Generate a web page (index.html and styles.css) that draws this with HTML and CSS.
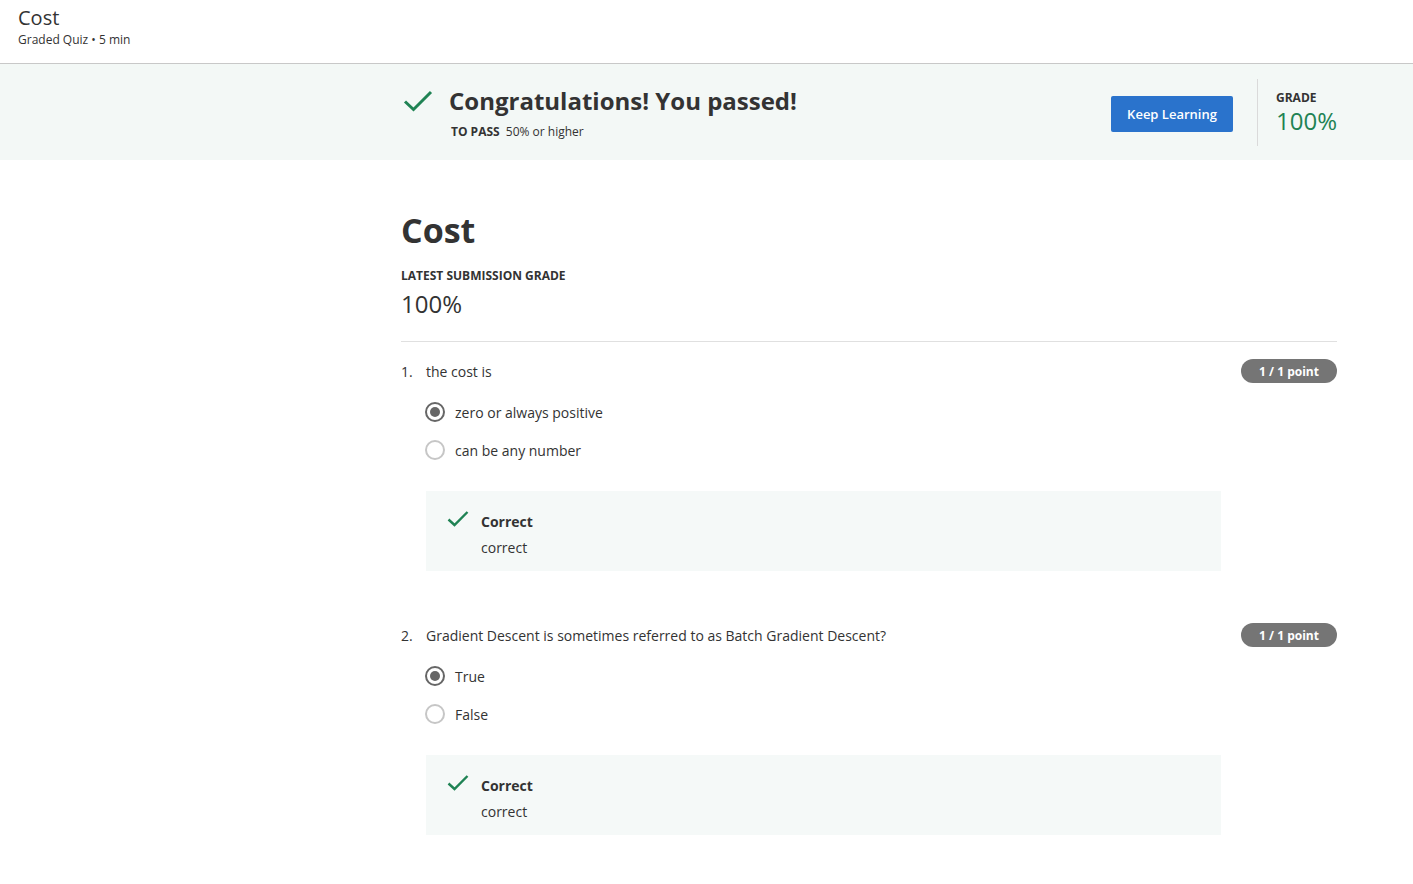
FILE: index.html
```html
<!DOCTYPE html>
<html lang="en">
<head>
<meta charset="utf-8">
<title>Cost</title>
<link rel="stylesheet" href="styles.css">
</head>
<body>
<header class="topbar">
  <div class="topbar-title">Cost</div>
  <div class="topbar-sub">Graded Quiz • 5 min</div>
</header>

<section class="banner">
  <div class="banner-inner">
    <div class="banner-main">
      <svg class="banner-check" width="30" height="24" viewBox="0 0 30 24"><path d="M2 12.5 L10.5 20.5 L28 3" fill="none" stroke="#1f8354" stroke-width="3"/></svg>
      <div class="banner-text">
        <h1 class="banner-title">Congratulations! You passed!</h1>
        <div class="banner-pass"><span class="pass-label">TO PASS</span> 50% or higher</div>
      </div>
    </div>
    <button class="btn-primary">Keep Learning</button>
    <div class="banner-grade">
      <div class="grade-label">GRADE</div>
      <div class="grade-value">100%</div>
    </div>
  </div>
</section>

<main class="content">
  <h2 class="quiz-title">Cost</h2>
  <div class="latest-label">LATEST SUBMISSION GRADE</div>
  <div class="latest-value">100%</div>

  <div class="questions">
    <div class="question">
      <div class="q-head">
        <span class="q-num">1.</span>
        <span class="q-text">the cost is</span>
        <span class="badge">1 / 1 point</span>
      </div>
      <div class="options">
        <label class="option"><span class="radio checked"></span><span>zero or always positive</span></label>
        <label class="option"><span class="radio"></span><span>can be any number</span></label>
      </div>
      <div class="feedback">
        <svg class="fb-check" width="22" height="18" viewBox="0 0 22 18"><path d="M1.5 9.5 L7.5 15 L20.5 2" fill="none" stroke="#1f8354" stroke-width="2.4"/></svg>
        <div class="fb-text">
          <div class="fb-title">Correct</div>
          <div class="fb-body">correct</div>
        </div>
      </div>
    </div>

    <div class="question">
      <div class="q-head">
        <span class="q-num">2.</span>
        <span class="q-text">Gradient Descent is sometimes referred to as Batch Gradient Descent?</span>
        <span class="badge">1 / 1 point</span>
      </div>
      <div class="options">
        <label class="option"><span class="radio checked"></span><span>True</span></label>
        <label class="option"><span class="radio"></span><span>False</span></label>
      </div>
      <div class="feedback">
        <svg class="fb-check" width="22" height="18" viewBox="0 0 22 18"><path d="M1.5 9.5 L7.5 15 L20.5 2" fill="none" stroke="#1f8354" stroke-width="2.4"/></svg>
        <div class="fb-text">
          <div class="fb-title">Correct</div>
          <div class="fb-body">correct</div>
        </div>
      </div>
    </div>
  </div>
</main>
</body>
</html>
```

FILE: styles.css
```css
* { box-sizing: border-box; }
html, body { margin: 0; padding: 0; background: #fff; }
body {
  font-family: "Open Sans", "Noto Sans", sans-serif;
  color: #333;
  overflow: hidden;
}

.topbar {
  height: 64px;
  padding: 5px 18px 0;
  border-bottom: 1px solid #c8c8c8;
}
.topbar-title {
  font-size: 20px;
  line-height: 26px;
  color: #333;
}
.topbar-sub {
  font-size: 12px;
  line-height: 16px;
  margin-top: 1px;
  color: #333;
}

.banner {
  background: #f3f8f6;
  height: 96px;
}
.banner-inner {
  margin-left: 401px;
  width: 936px;
  height: 100%;
  display: flex;
  align-items: center;
}
.banner-main {
  flex: 1;
  display: flex;
  align-items: flex-start;
  padding-top: 4px;
}
.banner-check {
  margin-top: 2px;
  margin-left: 2px;
  margin-right: 16px;
}
.banner-title {
  margin: 0;
  font-size: 24px;
  font-weight: 700;
  line-height: 28px;
  color: #333;
}
.banner-pass {
  font-size: 12px;
  line-height: 18px;
  margin-top: 8px;
  margin-left: 2px;
}
.pass-label { font-weight: 700; margin-right: 3px; }

.btn-primary {
  font-family: inherit;
  background: #2a73cc;
  color: #fff;
  border: none;
  border-radius: 2px;
  height: 36px;
  width: 122px;
  font-size: 13px;
  font-weight: 600;
  padding: 0;
  margin-right: 24px;
  margin-top: 3px;
}
.banner-grade {
  border-left: 1px solid #dadada;
  height: 67px;
  padding-left: 18px;
  width: 80px;
  padding-top: 11px;
}
.grade-label {
  font-size: 12px;
  font-weight: 700;
  line-height: 16px;
}
.grade-value {
  font-size: 24px;
  line-height: 30px;
  color: #1f8354;
}

.content {
  margin-left: 401px;
  width: 936px;
  padding-top: 48px;
}
.quiz-title {
  margin: 0;
  font-size: 34px;
  font-weight: 700;
  line-height: 44px;
  color: #333;
}
.latest-label {
  margin-top: 16px;
  font-size: 12px;
  font-weight: 700;
  line-height: 16px;
}
.latest-value {
  margin-top: 5px;
  font-size: 24px;
  line-height: 30px;
  padding-bottom: 22px;
  border-bottom: 1px solid #e0e0e0;
}

.questions { padding-top: 17px; }
.question { margin-bottom: 52px; }
.q-head {
  display: flex;
  align-items: center;
  height: 24px;
  font-size: 14px;
}
.q-num { width: 25px; }
.q-text { flex: 1; }
.badge {
  background: #757575;
  color: #fff;
  font-size: 12px;
  font-weight: 700;
  border-radius: 12px;
  height: 24px;
  width: 96px;
  display: flex;
  align-items: center;
  justify-content: center;
}

.options {
  padding-left: 24px;
  margin-top: 10px;
}
.option {
  display: flex;
  align-items: center;
  height: 38px;
  font-size: 14px;
}
.radio {
  width: 20px;
  height: 20px;
  border-radius: 50%;
  border: 2px solid #c6c6c6;
  margin-right: 10px;
  flex-shrink: 0;
  display: flex;
  align-items: center;
  justify-content: center;
}
.radio.checked { border-color: #666; }
.radio.checked::after {
  content: "";
  width: 10px;
  height: 10px;
  border-radius: 50%;
  background: #666;
}

.feedback {
  margin-left: 25px;
  margin-top: 22px;
  width: 795px;
  height: 80px;
  background: #f5f9f8;
  display: flex;
  align-items: flex-start;
  padding: 19px 0 0 21px;
}
.fb-check { margin-right: 12px; }
.fb-text { font-size: 14px; }
.fb-title { font-weight: 700; line-height: 22px; margin-top: 1px; }
.fb-body { line-height: 20px; margin-top: 5px; }
```
